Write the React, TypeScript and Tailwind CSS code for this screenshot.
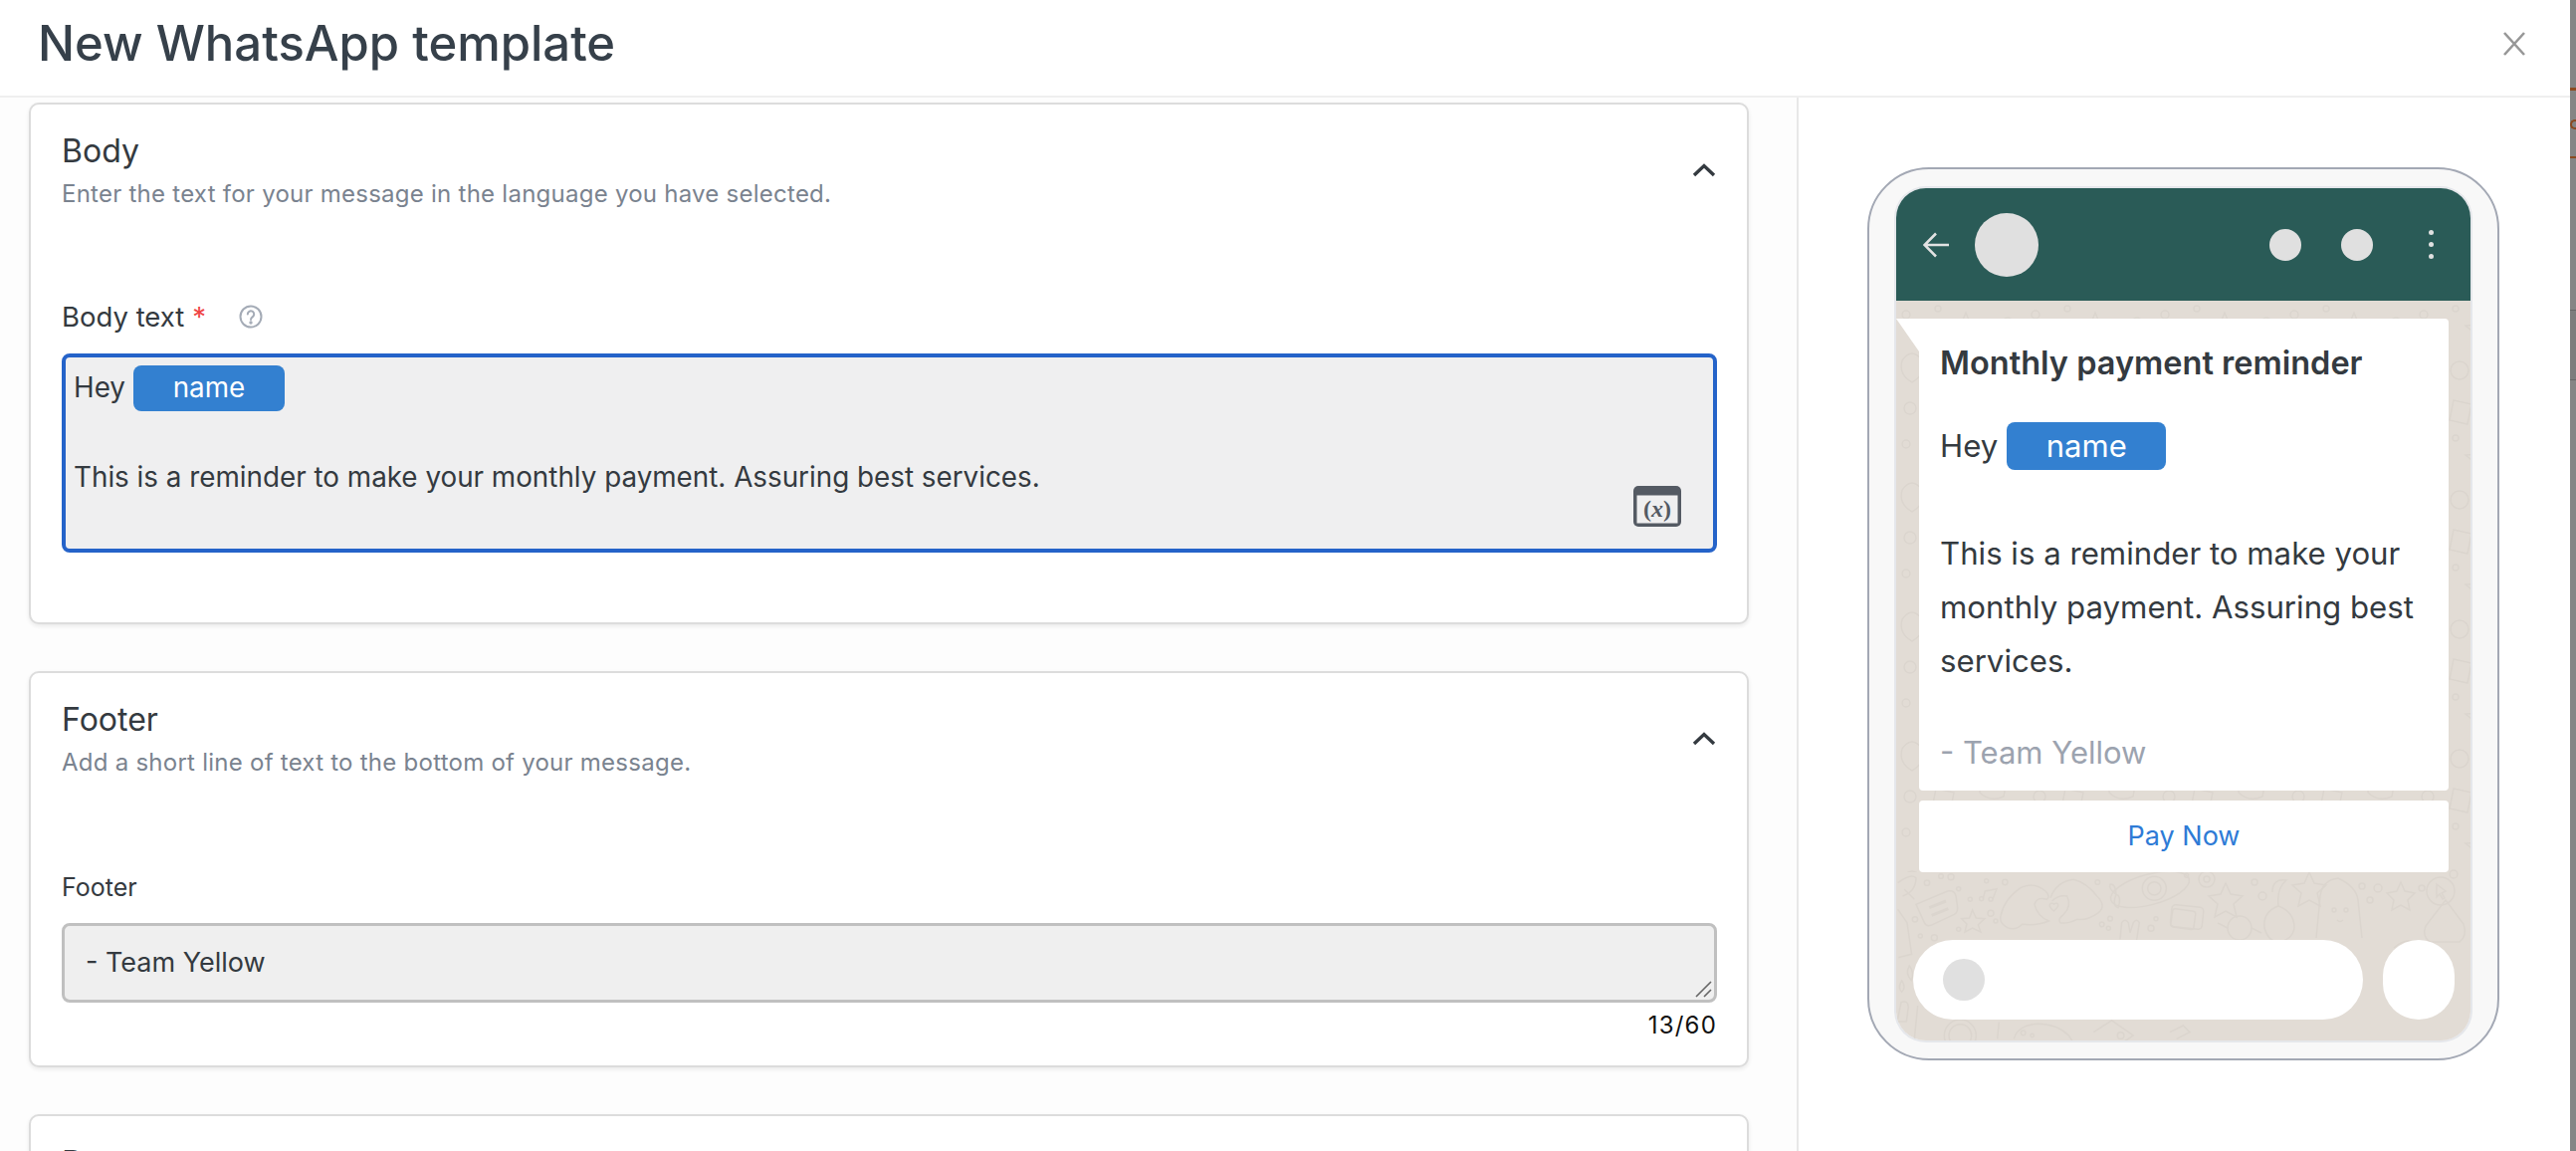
const font = "font-['Inter','Noto_Sans',sans-serif]";

const Chevron = () => (
  <svg width="24" height="14" viewBox="0 0 24 14" fill="none" stroke="#343a40" strokeWidth="3.4">
    <path d="M2 12 L12 2.5 L22 12" />
  </svg>
);

const HelpIcon = () => (
  <svg width="24" height="24" viewBox="0 0 24 24" fill="none" stroke="#a4abb6" strokeWidth="2">
    <circle cx="12" cy="12" r="10.5" />
    <path d="M8.8 9.6a3.2 3.2 0 1 1 5 2.6c-1.2.8-1.8 1.4-1.8 2.8" strokeLinecap="round" />
    <circle cx="12" cy="18" r="0.7" fill="#a4abb6" />
  </svg>
);

const VariableIcon = () => (
  <svg width="48" height="41" viewBox="0 0 48 41">
    <rect x="0" y="0" width="48" height="41" rx="5" fill="#545a63" />
    <rect x="3.5" y="9.5" width="41" height="28" fill="#efeff0" />
    <text
      x="24"
      y="30.5"
      textAnchor="middle"
      fontSize="24"
      fontWeight="700"
      fill="#545a63"
      fontFamily="'Liberation Serif', serif"
    >
      (<tspan fontStyle="italic">x</tspan>)
    </text>
  </svg>
);

const Chip = (props: { className: string }) => (
  <span className={`flex items-center justify-center bg-[#3380d0] text-white ${props.className}`}>name</span>
);

const Card = (props: { title: string; description?: string; children?: React.ReactNode }) => (
  <div className="relative rounded-[10px] border-2 border-[#dcdcdc] bg-white pl-[31px] pr-[30px] pt-[27px] shadow-[0_2px_4px_rgba(0,0,0,0.08)]">
    {props.description && (
      <div className="absolute right-[31px] top-[59px]">
        <Chevron />
      </div>
    )}
    <h3 className="text-[32px] leading-[40px] text-[#343a40]">{props.title}</h3>
    {props.description && (
      <p className="mt-[7px] text-[24px] leading-[32px] tracking-[0.25px] text-[#7a838f]">{props.description}</p>
    )}
    {props.children}
  </div>
);

const Doodles = () => (
  <svg className="absolute inset-0 h-full w-full" viewBox="0 0 577 743" fill="none" stroke="#dbd5ce" strokeWidth="1.5">
    <defs>
      <pattern id="tile" width="130" height="130" patternUnits="userSpaceOnUse">
        <circle cx="10" cy="14" r="4" />
        <circle cx="42" cy="8" r="3" />
        <path d="M70 12 l5 12 13 1 -10 8 3 13 -11 -7 -11 7 3 -13 -10 -8 13 -1z" />
        <circle cx="112" cy="22" r="5" />
        <path d="M6 60 q10 -14 20 0 q4 14 -10 22 q-14 -8 -10 -22z" />
        <circle cx="46" cy="70" r="9" />
        <circle cx="100" cy="62" r="3" />
        <path d="M84 84 q14 -10 28 2 l-4 22 q-14 6 -24 -4z" />
        <circle cx="14" cy="108" r="6" />
        <path d="M40 100 l18 4 -4 20 -18 -4z" />
        <circle cx="68" cy="118" r="3" />
      </pattern>
    </defs>
    <rect x="0" y="0" width="577" height="574" fill="url(#tile)" stroke="none" />
    <g transform="translate(-5 568) scale(0.3333)" strokeWidth="4.5">
      <path d="M75 115 L170 75 Q190 70 195 90 L200 125 Q200 140 190 145 L120 178 Q105 182 100 170 Z" />
      <path d="M115 125 L165 105 M122 148 L172 128" strokeWidth="9" />
      <path d="M277 98 L283 75 L318 68 L306 100" />
      <circle cx="272" cy="98" r="6" />
      <circle cx="300" cy="100" r="6" />
      <path d="M245 132 L256 156 L282 158 L262 176 L270 198 L245 186 L222 198 L228 174 L212 158 L236 156 Z" />
      <circle cx="108" cy="50" r="8" />
      <circle cx="150" cy="30" r="7" />
      <circle cx="180" cy="32" r="9" />
      <circle cx="203" cy="68" r="6" />
      <circle cx="238" cy="100" r="6" />
      <circle cx="287" cy="44" r="6" />
      <circle cx="343" cy="48" r="8" />
      <circle cx="300" cy="142" r="9" />
      <circle cx="315" cy="165" r="6" />
      <circle cx="72" cy="160" r="8" />
      <circle cx="88" cy="210" r="6" />
      <circle cx="130" cy="215" r="9" />
      <circle cx="203" cy="190" r="6" />
      <path d="M330 150 Q340 100 390 65 Q430 45 465 75 Q480 90 470 100 Q440 90 432 115 Q440 150 475 165 Q440 180 395 175 Q375 195 350 185 Q325 170 330 150Z" />
      <path d="M480 95 Q500 45 550 40 Q590 50 620 90 Q650 120 625 140 Q590 165 560 160 Q530 175 510 170 Q500 160 520 145 Q545 120 530 90 Q505 85 485 105" />
      <path d="M490 135 Q470 118 482 112 Q490 110 490 116 Q492 110 500 112 Q510 118 490 135Z" />
      <ellipse cx="780" cy="70" rx="122" ry="46" transform="rotate(-15 780 70)" />
      <circle cx="793" cy="67" r="36" />
      <circle cx="793" cy="67" r="20" />
      <path d="M678 85 Q655 70 660 55 Q675 50 678 85 Q695 90 685 125 Q665 120 678 85" />
      <path d="M690 220 L695 170 Q705 155 715 170 L720 200 L730 170 Q740 155 748 170 L740 222" />
      <rect x="845" y="132" width="70" height="55" rx="8" transform="rotate(8 880 160)" />
      <circle cx="660" cy="158" r="7" />
      <circle cx="635" cy="175" r="7" />
      <circle cx="655" cy="187" r="6" />
      <circle cx="783" cy="187" r="9" />
      <circle cx="798" cy="158" r="6" />
      <circle cx="622" cy="48" r="7" />
      <circle cx="890" cy="28" r="6" />
      <path d="M20 50 Q60 20 75 35 Q75 75 35 90 M40 70 L70 100" />
      <path d="M20 130 L48 170 L62 265 L22 275" />
      <path d="M32 345 q-14 20 0 34 q14 -14 0 -34z" />
      <path d="M30 410 q20 -8 22 14 l-6 44 -28 0z" />
      <path d="M55 300 q-14 24 6 44 q10 -24 -6 -44z" />
      <circle cx="208" cy="510" r="48" />
      <circle cx="208" cy="510" r="34" />
      <path d="M80 420 L70 520 M325 470 L320 520" />
      <path d="M370 520 Q380 480 440 475 Q500 475 535 510 L545 525" />
      <circle cx="398" cy="502" r="7" />
      <circle cx="425" cy="510" r="5" />
      <path d="M610 500 L665 465 L730 510 L700 530" />
      <circle cx="692" cy="510" r="10" />
      <path d="M840 500 L880 480 L900 500 L860 520" />
    </g>
    <g strokeWidth="1.5">
      <path d="M415 574 l5 11 12 2 -9 8 3 13 -11 -6 -11 6 3 -13 -9 -8 12 -2z" />
      <path d="M331 585 l5 11 12 2 -9 8 3 13 -11 -6 -11 6 3 -13 -9 -8 12 -2z" />
      <path d="M507 584 l4 9 10 2 -7 7 2 10 -9 -5 -9 5 2 -10 -7 -7 10 -2z" />
      <circle cx="312" cy="581" r="8" />
      <circle cx="312" cy="581" r="3" />
      <circle cx="547" cy="593" r="14" />
      <path d="M543 586 l9 7 -4 2 3 5 -2 1 -3 -5 -3 3z" />
      <path d="M384 608 q-16 6 -14 22 q4 14 14 14 q14 -2 16 -14 q0 -16 -16 -22 q-2 -18 8 -26 q-14 -2 -14 12" />
      <path d="M422 640 l4 -42 q2 -16 18 -18 q18 8 20 22 l4 38" />
      <circle cx="440" cy="612" r="2" />
      <circle cx="452" cy="612" r="2" />
      <path d="M443 622 q3 3 6 0" />
      <rect x="276" y="608" width="32" height="22" rx="4" transform="rotate(6 292 620)" />
      <circle cx="345" cy="630" r="12" />
      <path d="M333 630 l-10 -5 M357 630 l10 5" />
      <path d="M532 628 l20 -26 l18 24 q4 12 -4 18 l-30 0 q-8 -6 -4 -16z" />
      <circle cx="360" cy="584" r="3" />
      <circle cx="368" cy="598" r="4" />
      <circle cx="468" cy="588" r="3" />
      <circle cx="484" cy="590" r="4" />
      <circle cx="476" cy="602" r="3" />
      <circle cx="528" cy="590" r="3" />
      <circle cx="560" cy="576" r="4" />
      <path d="M500 650 q16 -14 26 0 q6 16 -8 28" />
    </g>
  </svg>
);

const Phone = () => (
  <div className="h-[897px] w-[635px] rounded-[62px] border-2 border-[#a3a8b4] bg-[#f8f8f8] pl-[27px] pr-[27px] pt-[19px]">
    <div className="flex h-[856px] w-[577px] flex-col overflow-hidden rounded-[30px] shadow-[0_0_0_2px_#e5e7eb]">
      <div className="flex h-[113px] shrink-0 items-center bg-[#2a5b57]">
        <svg className="ml-[27px]" width="27" height="26" viewBox="0 0 27 26" fill="none" stroke="#e2e2e2" strokeWidth="2.6">
          <path d="M26 13 H2 M13 1.5 L1.5 13 L13 24.5" />
        </svg>
        <div className="ml-[25px] h-[64px] w-[64px] rounded-full bg-[#e0e0e0]" />
        <div className="ml-[232px] h-[32px] w-[32px] rounded-full bg-[#e0e0e0]" />
        <div className="ml-[40px] h-[32px] w-[32px] rounded-full bg-[#e0e0e0]" />
        <div className="ml-[56px] flex flex-col gap-[7px]">
          <div className="h-[5px] w-[5px] rounded-full bg-[#e0e0e0]" />
          <div className="h-[5px] w-[5px] rounded-full bg-[#e0e0e0]" />
          <div className="h-[5px] w-[5px] rounded-full bg-[#e0e0e0]" />
        </div>
      </div>
      <div className="relative flex-1 bg-[#e2dcd5]">
        <Doodles />
        <div className="relative flex flex-col">
          <div className="relative ml-[23px] mr-[22px] mt-[18px] h-[474px] rounded-[4px] rounded-tl-none bg-white pl-[21px] pt-[23px]">
            <div className="absolute left-[-23px] top-0 h-[33px] w-[23px] bg-white [clip-path:polygon(0_0,100%_0,100%_100%)]" />
            <p className="text-[32.5px] font-semibold leading-[44px] text-[#343a40]">Monthly payment reminder</p>
            <div className="mt-[37px] flex h-[48px] items-center gap-[9px] text-[31.2px] text-[#343a40]">
              Hey
              <Chip className="h-[48px] w-[160px] rounded-[8px] text-[31px]" />
            </div>
            <p className="mt-[57px] w-[500px] text-[31.2px] leading-[54px] text-[#343a40]">
              This is a reminder to make your monthly payment. Assuring best services.
            </p>
            <p className="mt-[38px] text-[31px] leading-[54px] text-[#9ca3af]">- Team Yellow</p>
          </div>
          <div className="ml-[23px] mr-[22px] mt-[10px] flex h-[72px] items-center justify-center rounded-[4px] bg-white text-[27px] text-[#2e7bd6]">
            Pay Now
          </div>
          <div className="ml-[17px] mt-[68px] flex gap-[20px]">
            <div className="flex h-[80px] w-[452px] items-center rounded-full bg-white pl-[30px]">
              <div className="h-[42px] w-[42px] rounded-full bg-[#e0e0e0]" />
            </div>
            <div className="h-[80px] w-[72px] rounded-full bg-white" />
          </div>
        </div>
      </div>
    </div>
  </div>
);

export default function App() {
  return (
    <div className={`flex h-[1156px] w-[2588px] overflow-hidden bg-white ${font}`}>
      <div className="flex w-[2582px] flex-col">
        <div className="flex h-[98px] shrink-0 items-center justify-between border-b-2 border-[#efefef] pb-[8px] pl-[38px] pr-[45px]">
          <h1 className="text-[49px] font-medium text-[#36404a]">New WhatsApp template</h1>
          <svg width="22" height="24" viewBox="0 0 22 24" fill="none" stroke="#979797" strokeWidth="2.6">
            <path d="M1 1 L21 23 M21 1 L1 23" />
          </svg>
        </div>
        <div className="flex min-h-0 flex-1">
          <div className="flex w-[1805px] shrink-0 flex-col gap-[47px] bg-[#fdfdfd] pl-[29px] pr-[48px] pt-[5px]">
            <Card title="Body" description="Enter the text for your message in the language you have selected.">
              <div className="mt-[89px] flex items-center text-[27.5px] leading-[36px] text-[#343a40]">
                Body text
                <span className="ml-[8px] text-[#ef4444]">*</span>
                <span className="ml-[33px] flex">
                  <HelpIcon />
                </span>
              </div>
              <div className="relative mb-[70px] mt-[19px] h-[200px] rounded-[8px] border-4 border-[#2563c9] bg-[#efeff0] pl-[8px] pt-[8px] text-[27.8px] text-[#343a40]">
                <div className="flex h-[46px] items-center gap-[8px]">
                  Hey
                  <Chip className="h-[46px] w-[152px] rounded-[8px]" />
                </div>
                <p className="mt-[48px] leading-[36px]">
                  This is a reminder to make your monthly payment. Assuring best services.
                </p>
                <div className="absolute bottom-[22px] right-[32px] flex">
                  <VariableIcon />
                </div>
              </div>
            </Card>
            <Card title="Footer" description="Add a short line of text to the bottom of your message.">
              <p className="mt-[93px] text-[25px] leading-[32px] text-[#343a40]">Footer</p>
              <div className="relative mt-[20px] flex h-[80px] items-center rounded-[8px] border-[3px] border-[#c0c0c0] bg-[#efefef] pl-[21px] text-[27px] text-[#343a40]">
                - Team Yellow
                <svg className="absolute bottom-[2px] right-[2px]" width="18" height="18" viewBox="0 0 18 18" fill="none" stroke="#666" strokeWidth="1.6">
                  <path d="M2 17 L17 2 M10 17 L17 10" />
                </svg>
              </div>
              <p className="mb-[22px] mt-[5px] text-right text-[24px] leading-[36px] tracking-[1.2px] text-[#111]">13/60</p>
            </Card>
            <Card title="Buttons">
              <div className="h-[200px]" />
            </Card>
          </div>
          <div className="flex-1 border-l-2 border-[#e8e8e8] pl-[69px] pt-[70px]">
            <Phone />
          </div>
        </div>
      </div>
      <div className="relative w-[6px] shrink-0 bg-[#858585]">
        <div className="absolute left-0 top-[88px] h-[3px] w-full bg-[#8b4a20]" />
        <div className="absolute left-0 top-[120px] h-[10px] w-full rounded-l-full border-2 border-r-0 border-[#8b4a20]" />
        <div className="absolute left-0 top-[157px] h-[2px] w-full bg-[#8b4a20]" />
        <div className="absolute left-0 top-[311px] h-[71px] w-full border-y border-[#666] bg-[#7d7d7d]" />
      </div>
    </div>
  );
}
